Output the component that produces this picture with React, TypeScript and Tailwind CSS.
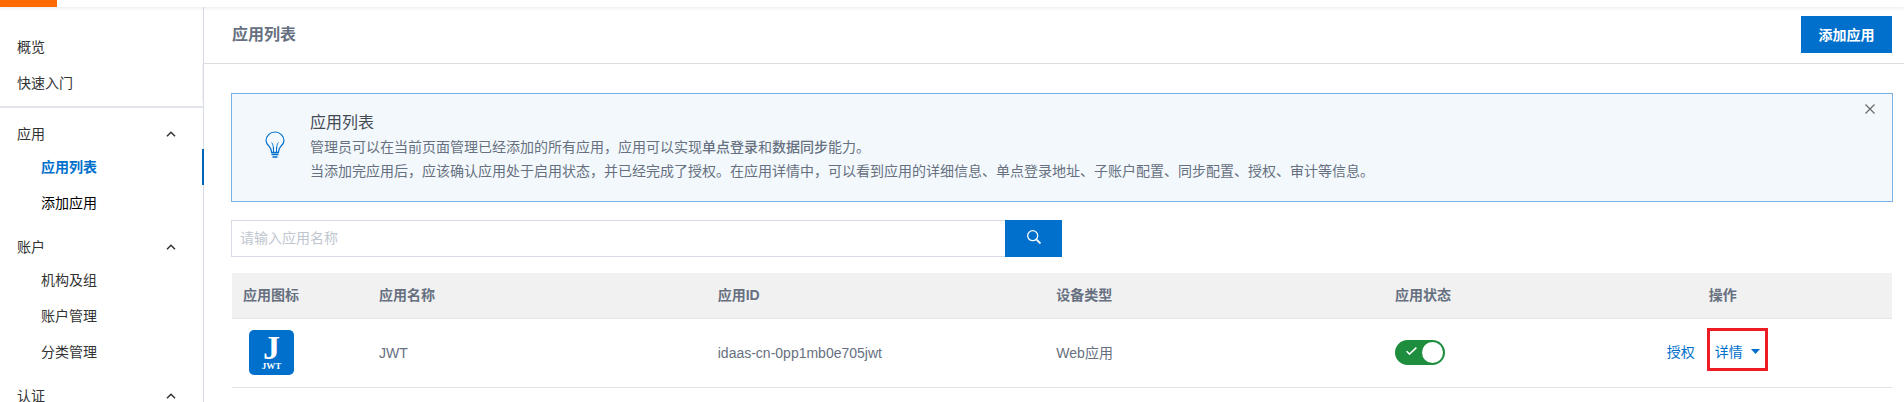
import React from 'react';

function Chevron() {
  return (
    <svg className="h-2 w-3" viewBox="0 0 12 8" fill="none" stroke="#333333" strokeWidth="1.5" aria-hidden="true">
      <path d="M2 6.2 6 2.2l4 4" />
    </svg>
  );
}

function Bulb() {
  return (
    <svg className="mb-[5px] h-7 w-5" viewBox="0 0 20 28" fill="none" stroke="#0070cc" strokeWidth="1.2" aria-hidden="true">
      <path d="M6.500 21c0-2-.6-3.600-2.400-5.800C2.100 13.300 1 11.800 1 9.800a9 8.800 0 0 1 18 0c0 2-1.100 3.500-3.100 5.400-1.800 2.200-2.400 3.800-2.400 5.800" />
      <path d="M6.500 11.500c1.200 1 2 3 2 9.500M13.500 11.500c-1.200 1-2 3-2 9.500M8.500 21v-5M11.500 21v-5" strokeWidth="1" />
      <path d="M6 21.500h8M6.500 23.500h7M7.500 26h5" strokeWidth="1.400" />
    </svg>
  );
}

function AppLogo() {
  return (
    <svg className="ml-1.5 block h-[45px] w-[45px]" viewBox="0 0 45 45" role="img" aria-label="JWT">
      <rect width="45" height="45" rx="5" fill="#0070cc" />
      <text x="22.500" y="29" fontSize="34" fontWeight="700" textAnchor="middle" fill="#fff" fontFamily="'Liberation Serif', serif">J</text>
      <text x="22.500" y="39" fontSize="9" fontWeight="700" textAnchor="middle" fill="#fff" fontFamily="'Liberation Serif', serif">JWT</text>
    </svg>
  );
}

const sections = [
  { title: '应用', items: ['应用列表', '添加应用'] },
  { title: '账户', items: ['机构及组', '账户管理', '分类管理'] },
  { title: '认证', items: [] as string[] },
];

function Sidebar() {
  return (
    <nav className="w-[204px] shrink-0 border-r border-[#d7dce4] text-[#333333]">
      <div className="border-b-2 border-[#e1e5eb] pt-[22px] pb-[5px]">
        <a href="#" className="flex h-9 items-center pl-[17px]">概览</a>
        <a href="#" className="flex h-9 items-center border-r border-[#f0f2f6] pl-[17px]">快速入门</a>
      </div>
      {sections.map((s) => (
        <div key={s.title} className="pt-[11px]">
          <button type="button" aria-expanded="true" className="flex h-[30px] w-full items-center justify-between pr-[26px] pl-[17px]">
            {s.title}
            <Chevron />
          </button>
          {s.items.map((t) =>
            t === '应用列表' ? (
              <a key={t} href="#" aria-current="page" className="-mr-px flex h-9 items-center border-r-2 border-[#0064b6] pl-[41px] font-bold text-[#0070cc]">{t}</a>
            ) : (
              <a key={t} href="#" className={t === '添加应用' ? 'flex h-9 items-center pl-[41px] text-black' : 'flex h-9 items-center pl-[41px]'}>{t}</a>
            ),
          )}
        </div>
      ))}
    </nav>
  );
}

function Notice() {
  return (
    <section className="flex h-[109px] items-center border border-[#79b1e4] bg-[#f3f8fc] pl-[33px]">
      <Bulb />
      <div className="ml-[25px] flex-1 pb-[2px]">
        <h2 className="text-base leading-6 text-[#444b55]">应用列表</h2>
        <p className="leading-6">管理员可以在当前页面管理已经添加的所有应用，应用可以实现<b className="font-medium">单点登录</b>和<b className="font-medium">数据同步</b>能力。</p>
        <p className="leading-6">当添加完应用后，应该确认应用处于启用状态，并已经完成了授权。在应用详情中，可以看到应用的详细信息、单点登录地址、子账户配置、同步配置、授权、审计等信息。</p>
      </div>
      <button type="button" aria-label="关闭" className="mt-[10px] mr-[17px] self-start">
        <svg className="h-[10px] w-[10px]" viewBox="0 0 10 10" fill="none" stroke="#666" strokeWidth="1.100" aria-hidden="true">
          <path d="m.5.5 9 9M9.500.5l-9 9" />
        </svg>
      </button>
    </section>
  );
}

function AppTable() {
  return (
    <div className="mt-4 px-px">
      <table className="w-full table-fixed border-collapse text-left">
        <colgroup>
          <col className="w-[8.2%]" />
          <col className="w-[20.4%]" />
          <col className="w-[20.4%]" />
          <col className="w-[20.4%]" />
          <col className="w-[10.2%]" />
          <col />
        </colgroup>
        <thead>
          <tr className="h-[45px] border-b border-[#e3e4e6] bg-[#f1f1f1]">
            {['应用图标', '应用名称', '应用ID', '设备类型', '应用状态'].map((h) => (
              <th key={h} scope="col" className="px-[11px] font-bold">{h}</th>
            ))}
            <th scope="col" className="text-center font-bold">操作</th>
          </tr>
        </thead>
        <tbody>
          <tr className="h-[69px] border-b border-[#e3e4e6]">
            <td className="px-[11px]"><AppLogo /></td>
            <td className="px-[11px]">JWT</td>
            <td className="px-[11px]">idaas-cn-0pp1mb0e705jwt</td>
            <td className="px-[11px]">Web应用</td>
            <td className="px-[11px]">
              <label className="relative flex h-[25px] w-[50px] items-center justify-between rounded-full bg-[#1e8e3e] pr-[2px] pl-[11px]">
                <input type="checkbox" role="switch" defaultChecked aria-label="应用状态" className="absolute inset-0 cursor-pointer opacity-0" />
                <svg className="mb-[3px] h-2 w-[11px]" viewBox="0 0 11 8" fill="none" stroke="#fff" strokeWidth="1.500" aria-hidden="true">
                  <path d="m.6 4.200 2.900 2.900L10.400.6" />
                </svg>
                <span className="h-[21px] w-[21px] rounded-full bg-white" />
              </label>
            </td>
            <td>
              <div className="flex items-center justify-center pr-[11px] pb-[6px] text-[#0070cc]">
                <a href="#" className="pt-1">授权</a>
                <button type="button" className="ml-3 flex h-[43px] w-[61px] items-center justify-center gap-2 border-3 border-[#ed1c24] pt-1">
                  详情
                  <svg className="h-[5px] w-[9px]" viewBox="0 0 9 5" fill="#0070cc" aria-hidden="true">
                    <path d="M0 0h9L4.500 5z" />
                  </svg>
                </button>
              </div>
            </td>
          </tr>
        </tbody>
      </table>
    </div>
  );
}

export default function App() {
  return (
    <div className="flex h-screen flex-col overflow-hidden bg-white font-['Liberation_Sans','Noto_Sans_CJK_SC',sans-serif] text-sm text-[#667080]">
      <header className="z-10 h-[7px] shrink-0 bg-white shadow-[0_1px_4px_rgba(0,0,0,0.09)]">
        <div className="h-full w-[57px] bg-[#ff6a00]" />
      </header>
      <div className="flex min-h-0 flex-1">
        <Sidebar />
        <main className="min-w-0 flex-1">
          <div className="flex h-[57px] items-center justify-between border-b border-[#dedede] pr-3 pb-px pl-7">
            <h1 className="text-base font-bold">应用列表</h1>
            <button type="button" className="h-[37px] w-[91px] bg-[#0070cc] font-bold text-white">添加应用</button>
          </div>
          <div className="pt-[29px] pr-[11px] pl-[27px]">
            <Notice />
            <form className="mt-[18px] flex h-[37px] w-1/2" onSubmit={(e) => e.preventDefault()}>
              <input type="text" aria-label="应用名称" placeholder="请输入应用名称" className="min-w-0 flex-1 border border-r-0 border-[#d7dce4] px-2 pb-[2px] outline-none placeholder:text-[#c0c6cf]" />
              <button type="submit" aria-label="搜索" className="flex w-[57px] items-center justify-center bg-[#0070cc] pb-[3px]">
                <svg className="h-[14px] w-[14px]" viewBox="0 0 14 14" fill="none" stroke="#fff" strokeWidth="1.300" aria-hidden="true">
                  <circle cx="5.700" cy="5.700" r="5" />
                  <path d="m9.300 9.300 4.200 4.200" strokeWidth="1.800" />
                </svg>
              </button>
            </form>
            <AppTable />
          </div>
        </main>
      </div>
    </div>
  );
}
